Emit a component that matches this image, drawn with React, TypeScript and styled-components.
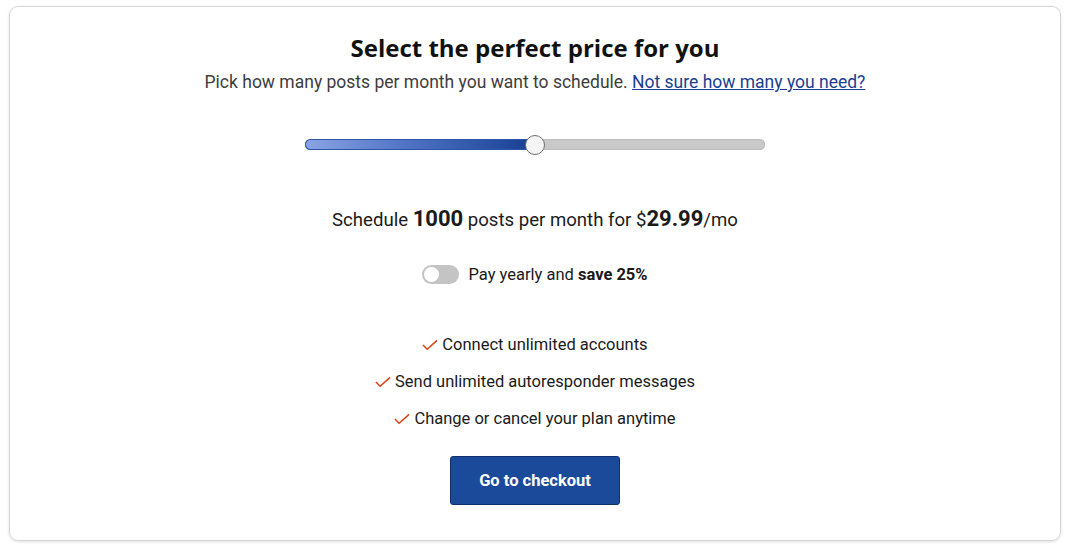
import React, { useState } from "react";
import styled, { createGlobalStyle } from "styled-components";

const GlobalStyle = createGlobalStyle`
  html, body {
    margin: 0;
    padding: 0;
    background: #ffffff;
  }
  body {
    font-family: Roboto, "Liberation Sans", Arial, sans-serif;
    color: #1e1e1e;
  }
`;

const features = [
  "Connect unlimited accounts",
  "Send unlimited autoresponder messages",
  "Change or cancel your plan anytime",
];

const App = () => {
  const [yearly, setYearly] = useState(false);
  const percent = 50;

  return (
    <>
      <GlobalStyle />
      <Page>
        <Card>
          <Title>Select the perfect price for you</Title>
          <Subtitle>
            Pick how many posts per month you want to schedule.{" "}
            <HelpLink href="#">Not sure how many you need?</HelpLink>
          </Subtitle>

          <SliderTrack>
            <SliderFill style={{ width: `${percent}%` }} />
            <SliderThumb style={{ left: `${percent}%` }} />
          </SliderTrack>

          <Summary>
            Schedule <Strong>1000</Strong> posts per month for $<Strong>29.99</Strong>/mo
          </Summary>

          <ToggleRow>
            <Switch $on={yearly} onClick={() => setYearly(!yearly)}>
              <Knob $on={yearly} />
            </Switch>
            <span>
              Pay yearly and <b>save 25%</b>
            </span>
          </ToggleRow>

          <FeatureList>
            {features.map((f) => (
              <Feature key={f}>
                <Check viewBox="0 0 17 12">
                  <path d="M1 6 L5.5 10.5 L16 1" />
                </Check>
                {f}
              </Feature>
            ))}
          </FeatureList>

          <CheckoutButton>Go to checkout</CheckoutButton>
        </Card>
      </Page>
    </>
  );
};

export default App;

const Page = styled.div`
  width: 1070px;
  height: 547px;
  padding: 6px 9px 6px 9px;
  box-sizing: border-box;
`;

const Card = styled.div`
  height: 535px;
  box-sizing: border-box;
  border: 1px solid #d6d6d6;
  border-radius: 9px;
  box-shadow: 0 1px 3px rgba(0, 0, 0, 0.12);
  display: flex;
  flex-direction: column;
  align-items: center;
  padding-top: 25px;
`;

const Title = styled.h1`
  margin: 0;
  font-family: "Open Sans", "Liberation Sans", sans-serif;
  font-weight: 700;
  font-size: 24px;
  line-height: 32px;
  color: #111;
`;

const Subtitle = styled.p`
  margin: 6px 0 0;
  font-size: 17.5px;
  line-height: 24px;
  color: #3d3d3d;
`;

const HelpLink = styled.a`
  color: #1a3f8f;
  text-decoration: underline;
`;

const SliderTrack = styled.div`
  position: relative;
  margin-top: 45px;
  width: 460px;
  height: 11px;
  border-radius: 6px;
  background: #c9c9c9;
  box-shadow: inset 0 0 0 1px #bdbdbd;
`;

const SliderFill = styled.div`
  height: 100%;
  border-radius: 6px 0 0 6px;
  background: linear-gradient(90deg, #8ba4e4 0%, #4f72c4 45%, #163f91 100%);
  box-shadow: inset 0 0 0 1px #2f55a8;
`;

const SliderThumb = styled.div`
  position: absolute;
  top: 50%;
  width: 18px;
  height: 18px;
  border-radius: 50%;
  background: #f4f4f4;
  border: 1px solid #6e6e6e;
  transform: translate(-50%, -50%);
`;

const Summary = styled.p`
  margin: 56px 0 0;
  font-size: 18.6px;
  line-height: 26px;
  color: #1a1a1a;
`;

const Strong = styled.b`
  font-size: 22px;
  font-weight: 700;
`;

const ToggleRow = styled.div`
  margin-top: 32px;
  display: flex;
  align-items: center;
  gap: 9px;
  font-size: 16.5px;
  color: #1a1a1a;
`;

const Switch = styled.div<{ $on: boolean }>`
  position: relative;
  width: 37px;
  height: 19px;
  border-radius: 10px;
  background: ${(p) => (p.$on ? "#1a4a9a" : "#c4c4c4")};
  cursor: pointer;
`;

const Knob = styled.div<{ $on: boolean }>`
  position: absolute;
  top: 2px;
  left: ${(p) => (p.$on ? "20px" : "2px")};
  width: 15px;
  height: 15px;
  border-radius: 50%;
  background: #fff;
`;

const FeatureList = styled.div`
  margin-top: 49px;
  display: flex;
  flex-direction: column;
  align-items: center;
  gap: 13px;
`;

const Feature = styled.div`
  display: flex;
  align-items: center;
  gap: 4px;
  font-size: 16.5px;
  line-height: 24px;
  color: #1a1a1a;
`;

const Check = styled.svg`
  width: 16px;
  height: 12px;
  fill: none;
  stroke: #d9481a;
  stroke-width: 1.7;
`;

const CheckoutButton = styled.button`
  margin-top: 25px;
  width: 170px;
  height: 49px;
  border-radius: 3px;
  border: 1px solid #0f2f6e;
  background: #1b4a9b;
  color: #fff;
  font-family: Roboto, "Liberation Sans", sans-serif;
  font-weight: 700;
  font-size: 16.5px;
  cursor: pointer;
`;
